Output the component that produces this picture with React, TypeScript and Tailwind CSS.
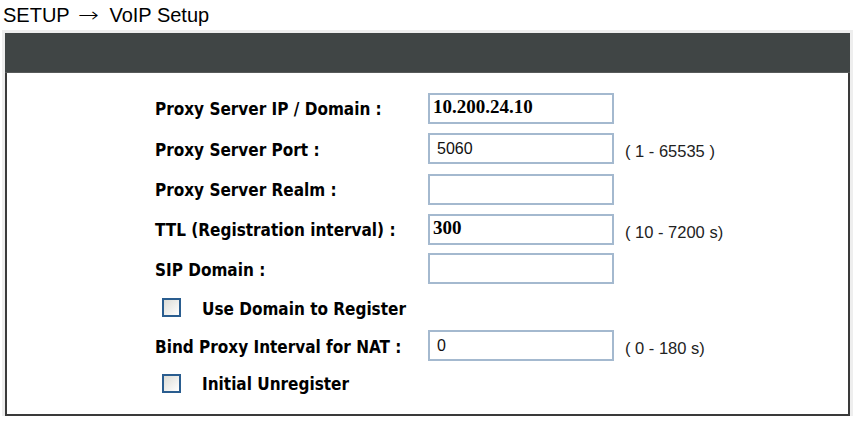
import React from 'react';

const label = 'font-["DejaVu_Sans_Condensed","DejaVu_Sans",sans-serif] font-bold text-[17px] text-black';
const note = 'font-["Liberation_Sans",Arial,sans-serif] text-[16.5px] text-[#222]';

function TextBox({ value, serif }: { value?: string; serif?: boolean }) {
  return (
    <div className="w-[186px] h-[31px] border-2 border-[#a4b9cf] bg-white flex items-start">
      {value && (
        <span
          className={
            serif
              ? 'pl-[3px] pt-[2px] font-["Liberation_Serif","Times_New_Roman",serif] font-bold text-[19px] leading-[20px] text-black'
              : 'pl-[7px] pt-[4px] font-["Liberation_Sans",Arial,sans-serif] text-[16px] leading-[20px] text-[#111]'
          }
        >
          {value}
        </span>
      )}
    </div>
  );
}

function CheckBox() {
  return <div className="w-[19px] h-[19px] border-2 border-[#2a5d8f] bg-gradient-to-br from-[#dcdcd6] to-white" />;
}

interface Row {
  text: string;
  value?: string;
  serif?: boolean;
  range?: string;
  h: string;
}

function FieldRow({ row }: { row: Row }) {
  return (
    <div className={`flex items-center ${row.h}`}>
      <div className={`w-[273px] pt-[4px] ${label}`}>{row.text}</div>
      <TextBox value={row.value} serif={row.serif} />
      {row.range && <div className={`ml-[11px] pt-[6px] ${note}`}>{row.range}</div>}
    </div>
  );
}

function CheckRow({ text, h }: { text: string; h: string }) {
  return (
    <div className={`flex items-center ${h} pl-[7px]`}>
      <CheckBox />
      <span className={`ml-[21px] pt-[4px] ${label}`}>{text}</span>
    </div>
  );
}

export default function App() {
  return (
    <div className="w-[860px] h-[427px] bg-white overflow-hidden">
      <div className='h-[30px] pl-[3px] flex items-center font-["Liberation_Sans",Arial,sans-serif] text-[20px] leading-[24px] text-black'>
        <span>SETUP</span>
        <span className='ml-[10px] mr-[13px] font-["DejaVu_Sans",sans-serif] text-[20px] leading-[24px] font-extralight scale-x-125'>→</span>
        <span>VoIP Setup</span>
      </div>
      <div className="ml-[2px] w-[851px] bg-[#eeeeee] pt-[3px] px-[3px]">
        <div className="border-x-2 border-b-2 border-[#3a3a3a] bg-white">
          <div className="h-[40px] bg-[#404545] border-b border-[#575a5a] -mx-[2px]" />
          <div className="pl-[148px] pt-[15px] pb-[12px]">
            <FieldRow row={{ text: 'Proxy Server IP / Domain :', value: '10.200.24.10', serif: true, h: 'h-[40px]' }} />
            <FieldRow row={{ text: 'Proxy Server Port :', value: '5060', range: '( 1 - 65535 )', h: 'h-[41px]' }} />
            <FieldRow row={{ text: 'Proxy Server Realm :', h: 'h-[40px]' }} />
            <FieldRow row={{ text: 'TTL (Registration interval) :', value: '300', serif: true, range: '( 10 - 7200 s)', h: 'h-[40px]' }} />
            <FieldRow row={{ text: 'SIP Domain :', h: 'h-[39px]' }} />
            <CheckRow text="Use Domain to Register" h="h-[39px]" />
            <FieldRow row={{ text: 'Bind Proxy Interval for NAT :', value: '0', range: '( 0 - 180 s)', h: 'h-[37px]' }} />
            <CheckRow text="Initial Unregister" h="h-[38px]" />
          </div>
        </div>
      </div>
    </div>
  );
}
